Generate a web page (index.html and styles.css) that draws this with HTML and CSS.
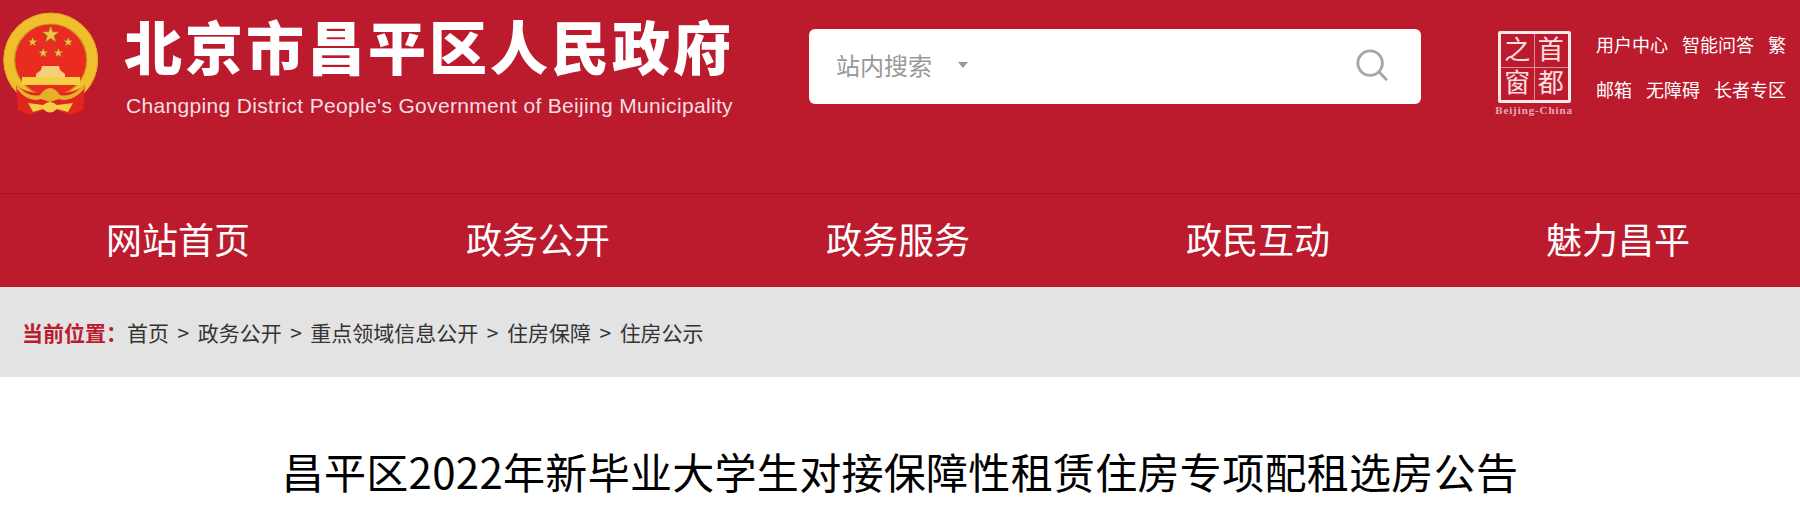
FILE: index.html
```html
<!DOCTYPE html>
<html lang="zh-CN">
<head>
<meta charset="utf-8">
<title>昌平区2022年新毕业大学生对接保障性租赁住房专项配租选房公告</title>
<link rel="stylesheet" href="styles.css">
</head>
<body>
<header class="top">
  <svg class="emblem" viewBox="0 0 100 110" aria-hidden="true">
    <defs>
      <polygon id="star" points="0,-10 2.350,-3.240 9.510,-3.090 3.800,1.240 5.880,8.090 0,4 -5.880,8.090 -3.800,1.240 -9.510,-3.090 -2.350,-3.240"/>
    </defs>
    <circle cx="50.700" cy="52" r="41.500" fill="none" stroke="#f0bf2c" stroke-width="11"/>
    <circle cx="50.700" cy="52" r="47" fill="none" stroke="#e0a426" stroke-width="1"/>
    <circle cx="50.700" cy="52" r="36" fill="#e92b20" stroke="#c9971f" stroke-width="1.200"/>
    <g fill="#f0c440" stroke="#8f6a20" stroke-width=".7">
      <use href="#star" transform="translate(50.700 26.700) scale(.92)"/>
      <use href="#star" transform="translate(32.700 34) scale(.5)"/>
      <use href="#star" transform="translate(68.300 34) scale(.5)"/>
      <use href="#star" transform="translate(43.300 45) scale(.5)"/>
      <use href="#star" transform="translate(58.300 45) scale(.5)"/>
    </g>
    <path d="M36 66 L41 62 L42 58 H59 L60 62 L65 66 V69 H36Z" fill="#f5cf7a"/>
    <path d="M22 69 H80 V77 H22Z" fill="#f6cf45"/>
    <path d="M16 77 Q30 88 50 84 Q71 88 85 77 L83 102 L70 107 L50 100 L30 107 L18 102Z" fill="#e3261d"/>
    <path d="M16 76 Q28 90 40 87 Q45 80 50 80 Q55 80 60 87 Q72 90 85 76 L84 81 Q72 95 59 91 L50 94 L41 91 Q28 95 17 81Z" fill="#e5b02a"/>
    <path d="M28 95 L43 97 Q50 91 57 97 L73 95 L68 104 L57 101 Q50 108 43 101 L33 104Z" fill="#f5cd45"/>
  </svg>
  <div class="brand">
    <h1 class="brand-cn">北京市昌平区人民政府</h1>
    <p class="brand-en">Changping District People's Government of Beijing Municipality</p>
  </div>
  <form class="search">
    <span class="search-label">站内搜索</span>
    <span class="caret"></span>
    <svg class="search-icon" viewBox="0 0 36 36" aria-hidden="true">
      <circle cx="16" cy="16" r="13" fill="none" stroke="#a6a6a6" stroke-width="3"/>
      <path d="M25.500 25.500 L33 33" stroke="#a6a6a6" stroke-width="3" stroke-linecap="round"/>
    </svg>
  </form>
  <div class="capital">
    <div class="seal">
      <span class="seal-char">之</span>
      <span class="seal-char">首</span>
      <span class="seal-char">窗</span>
      <span class="seal-char">都</span>
    </div>
    <span class="seal-en">Beijing-China</span>
  </div>
  <div class="tools">
    <div class="tool-row">
      <a>用户中心</a><a>智能问答</a><a>繁</a>
    </div>
    <div class="tool-row">
      <a>邮箱</a><a>无障碍</a><a>长者专区</a>
    </div>
  </div>
</header>
<nav class="nav">
  <a class="nav-item">网站首页</a>
  <a class="nav-item">政务公开</a>
  <a class="nav-item">政务服务</a>
  <a class="nav-item">政民互动</a>
  <a class="nav-item">魅力昌平</a>
</nav>
<div class="crumbs">
  <strong class="crumbs-label">当前位置：</strong>
  <a>首页</a><span class="sep">&gt;</span>
  <a>政务公开</a><span class="sep">&gt;</span>
  <a>重点领域信息公开</a><span class="sep">&gt;</span>
  <a>住房保障</a><span class="sep">&gt;</span>
  <a>住房公示</a>
</div>
<main class="article">
  <h2 class="article-title">昌平区2022年新毕业大学生对接保障性租赁住房专项配租选房公告</h2>
</main>
</body>
</html>
```
FILE: styles.css
```css
* { box-sizing: border-box; }
html, body { margin: 0; padding: 0; height: 518px; overflow: hidden; }
body {
  background: #fff;
  font-family: "Noto Sans CJK SC", "Liberation Sans", sans-serif;
  color: #333;
}
.top {
  height: 193px;
  background: #bc1b2e;
  display: flex;
  align-items: flex-start;
  color: #fff;
}
.emblem { width: 100px; height: 110px; margin-top: 8px; flex: none; }
.brand { width: 620px; margin-left: 24px; flex: none; }
.brand-cn {
  margin: 6px 0 0;
  font-size: 58px;
  line-height: 78px;
  font-weight: 900;
  letter-spacing: 3px;
  white-space: nowrap;
}
.brand-en {
  margin: 10px 0 0 2px;
  font-family: "Liberation Sans", sans-serif;
  font-size: 21px;
  line-height: 24px;
  letter-spacing: .33px;
  white-space: nowrap;
  color: #f6dfe2;
}
.search {
  width: 612px;
  height: 75px;
  margin: 29px 0 0 65px;
  background: #fff;
  border-radius: 6px;
  display: flex;
  align-items: center;
  padding: 0 32px 4px 27px;
  flex: none;
}
.search-label { font-size: 24px; color: #999; }
.caret {
  margin-left: 26px;
  border-style: solid;
  border-width: 6px 5px 0;
  border-color: #999 transparent transparent;
}
.search-icon { width: 34px; height: 34px; margin-left: auto; }
.capital {
  flex: none;
  width: 84px;
  margin: 31px 0 0 71px;
  display: flex;
  flex-direction: column;
  align-items: center;
}
.seal {
  width: 73px;
  height: 72px;
  border: 3px solid #f7e9ea;
  border-radius: 2px;
  display: grid;
  grid-template: 1fr 1fr / 1fr 1fr;
  background:
    linear-gradient(#dc8d97, #dc8d97) center / 1px 100% no-repeat,
    linear-gradient(#dc8d97, #dc8d97) center / 100% 1px no-repeat;
}
.seal-char {
  font-family: "Liberation Serif", "Noto Sans CJK SC", serif;
  font-size: 26px;
  line-height: 33px;
  text-align: center;
  color: #f7e0e3;
}
.seal-en {
  margin-top: 1px;
  font-family: "Liberation Serif", serif;
  font-weight: 700;
  font-size: 11px;
  line-height: 13px;
  letter-spacing: .9px;
  color: #e3aeb5;
  white-space: nowrap;
}
.tools { flex: none; margin: 30px 0 0 20px; width: 200px; }
.tool-row {
  display: flex;
  gap: 14px;
  font-size: 18px;
  line-height: 29px;
  margin-bottom: 16px;
  white-space: nowrap;
}
.nav {
  height: 94px;
  background: #bc1b2e;
  border-top: 1px solid #9c1625;
  display: grid;
  grid-template-columns: repeat(5, 360px);
  align-items: center;
  text-align: center;
  color: #fff;
  font-size: 36px;
  padding-bottom: 5px;
}
.nav-item { padding-right: 4px; }
.crumbs {
  height: 90px;
  background: #e3e3e3;
  padding-left: 22px;
  display: flex;
  align-items: center;
  font-size: 21px;
  white-space: nowrap;
}
.crumbs-label { color: #bc1b2e; font-weight: 700; }
.sep { margin: 0 8.500px; }
.article { padding-top: 61px; text-align: center; }
.article-title {
  margin: 0;
  font-size: 42px;
  line-height: 66px;
  font-weight: 400;
  letter-spacing: .3px;
  color: #000;
  white-space: nowrap;
}
```
